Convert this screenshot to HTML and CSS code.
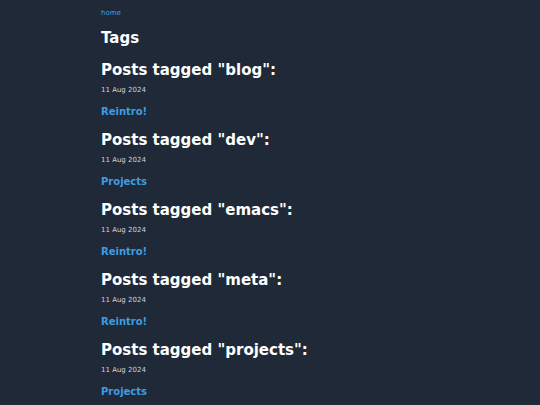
FILE: index.html
```html
<!DOCTYPE html>
<html>
<head>
<meta charset="utf-8">
<link rel="stylesheet" href="styles.css">
</head>
<body>
<main class="page">
  <nav class="crumbs"><a href="#">home</a></nav>
  <h1 class="title">Tags</h1>
  <section class="tag">
    <h2 class="tag-title">Posts tagged "blog":</h2>
    <div class="date">11 Aug 2024</div>
    <a class="post" href="#">Reintro!</a>
  </section>
  <section class="tag">
    <h2 class="tag-title">Posts tagged "dev":</h2>
    <div class="date">11 Aug 2024</div>
    <a class="post" href="#">Projects</a>
  </section>
  <section class="tag">
    <h2 class="tag-title">Posts tagged "emacs":</h2>
    <div class="date">11 Aug 2024</div>
    <a class="post" href="#">Reintro!</a>
  </section>
  <section class="tag">
    <h2 class="tag-title">Posts tagged "meta":</h2>
    <div class="date">11 Aug 2024</div>
    <a class="post" href="#">Reintro!</a>
  </section>
  <section class="tag">
    <h2 class="tag-title">Posts tagged "projects":</h2>
    <div class="date">11 Aug 2024</div>
    <a class="post" href="#">Projects</a>
  </section>
</main>
</body>
</html>
```

FILE: styles.css
```css
html, body {
  margin: 0;
  padding: 0;
  background: #1f2937;
  color: #ffffff;
  font-family: "DejaVu Sans", sans-serif;
}
.page {
  padding: 8px 0 0 101px;
}
.crumbs {
  font-size: 7px;
  line-height: 10px;
}
.crumbs a {
  color: #3e9de4;
  text-decoration: none;
}
.title {
  font-size: 15px;
  line-height: 20px;
  margin: 10px 0 1px 0;
  font-weight: bold;
}
.tag {
  display: flex;
  flex-direction: column;
  align-items: flex-start;
}
.tag-title {
  font-size: 15px;
  line-height: 20px;
  margin: 11px 0 0 0;
  font-weight: bold;
}
.date {
  font-size: 7px;
  line-height: 10px;
  margin-top: 5px;
  color: #d1d5db;
}
.post {
  font-size: 10px;
  line-height: 14px;
  margin-top: 10px;
  font-weight: bold;
  color: #3e9de4;
  text-decoration: none;
}
```
